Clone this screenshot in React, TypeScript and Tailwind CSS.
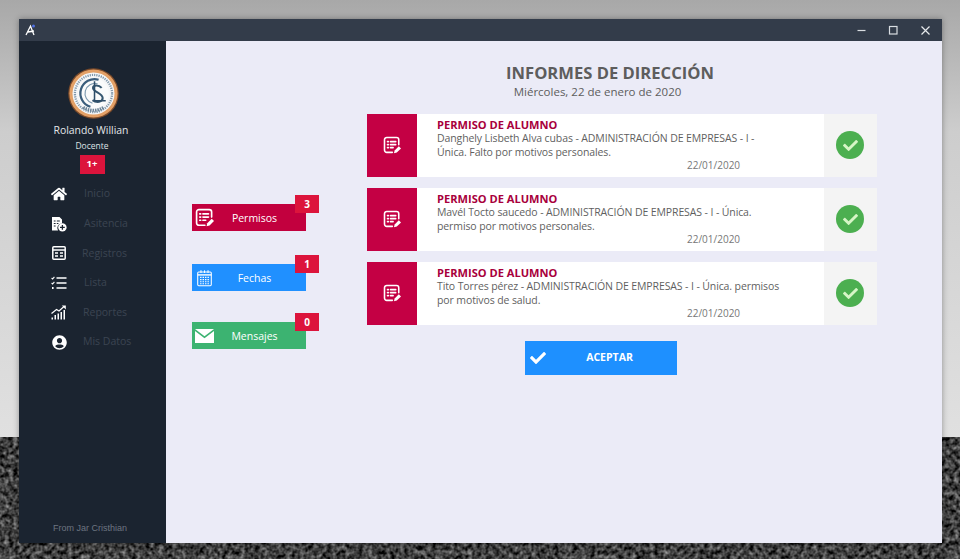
import { FaHome, FaCheck, FaUserCircle } from "react-icons/fa";

function DocPen(props: { size: number }) {
  return (
    <svg width={props.size} height={props.size} viewBox="0 0 24 24" fill="none" stroke="white" strokeWidth="2.1" strokeLinecap="round" strokeLinejoin="round">
      <path d="M12.5 21.8H5a3 3 0 0 1-3-3V5a3 3 0 0 1 3-3h13a3 3 0 0 1 3 3v6.5" />
      <line x1="6" y1="7.5" x2="7.2" y2="7.5" />
      <line x1="10" y1="7.5" x2="17" y2="7.5" />
      <line x1="6" y1="11.5" x2="7.2" y2="11.5" />
      <line x1="10" y1="11.5" x2="17" y2="11.5" />
      <line x1="6" y1="15.5" x2="7.2" y2="15.5" />
      <line x1="10" y1="15.5" x2="13.5" y2="15.5" />
      <path d="M14.6 23l.9-3.8 5.6-5.6 2.9 2.9-5.6 5.6z" fill="white" stroke="none" />
    </svg>
  );
}

function CalendarIcon() {
  return (
    <svg width="15" height="18" viewBox="0 0 17 19" fill="none" stroke="white" strokeWidth="1.2">
      <rect x="0.8" y="2.6" width="15.4" height="15.6" rx="1.2" />
      <line x1="0.8" y1="6" x2="16.2" y2="6" strokeWidth="1.6" />
      <line x1="4.5" y1="0.8" x2="4.5" y2="3.8" />
      <line x1="8.5" y1="0.8" x2="8.5" y2="3.8" />
      <line x1="12.5" y1="0.8" x2="12.5" y2="3.8" />
      <path d="M3.5 8.8h10M3.5 11.3h10M3.5 13.8h10M3.5 16h10" strokeDasharray="1.6 1.2" strokeWidth="1.3" />
    </svg>
  );
}

function MailIcon() {
  return (
    <svg width="19" height="14" viewBox="0 0 19 14" fill="white">
      <path d="M0 0h19L9.5 7.2z" />
      <path d="M0 2l9.5 7.2L19 2v12H0z" />
    </svg>
  );
}

function AddDocIcon() {
  return (
    <svg width="16" height="16" viewBox="0 0 16 16" fill="none">
      <path d="M1 1h7.5L11 3.5v3.9A4.6 4.6 0 0 0 7 14.5H1z" fill="white" />
      <path d="M2.8 5h1.8M5.8 5h3M2.8 7.5h1.8M5.8 7.5h1.6M2.8 10h1.8" stroke="#1b2430" strokeWidth="1.1" />
      <circle cx="11.4" cy="11.4" r="4.2" fill="white" />
      <path d="M11.4 9v4.8M9 11.4h4.8" stroke="#1b2430" strokeWidth="1.3" />
    </svg>
  );
}

function RegistrosIcon() {
  return (
    <svg width="14" height="14" viewBox="0 0 14 14" fill="none" stroke="white">
      <rect x="0.8" y="0.8" width="12.4" height="12.4" rx="1" strokeWidth="1.5" />
      <line x1="1" y1="4" x2="13" y2="4" strokeWidth="1.5" />
      <path d="M3 7h3M8 7h3M3 10h3M8 10h3" strokeWidth="1.5" />
    </svg>
  );
}

function ListaIcon() {
  return (
    <svg width="16" height="14" viewBox="0 0 16 14" fill="none" stroke="white" strokeWidth="1.6">
      <path d="M5.5 2h10M5.5 7h10M5.5 12h10" />
      <path d="M0.6 2l1 1L3.4 0.8" strokeWidth="1.1" />
      <path d="M0.6 7l1 1L3.4 5.8" strokeWidth="1.1" />
      <path d="M1 12h1.6" strokeWidth="1.8" />
    </svg>
  );
}

function ReportesIcon() {
  return (
    <svg width="16" height="15" viewBox="0 0 16 15" fill="white">
      <rect x="0.5" y="12.5" width="1.5" height="2" />
      <rect x="3.5" y="10" width="1.5" height="4.5" />
      <rect x="6.5" y="8.5" width="1.5" height="6" />
      <rect x="9.5" y="7" width="1.5" height="7.5" />
      <rect x="12.5" y="5" width="1.5" height="9.5" />
      <path d="M0.5 8.5L5.5 4.5l2.5 1.5L13 1.5" fill="none" stroke="white" strokeWidth="1.2" />
      <path d="M10.8 0.5h4v4z" />
    </svg>
  );
}

function Logo() {
  return (
    <svg className="ml-[3px]" width="51" height="51" viewBox="0 0 50 50" fill="none">
      <circle cx="25" cy="25" r="24.8" fill="#7a4a2a" />
      <circle cx="25" cy="25" r="23.6" fill="#e3a066" />
      <circle cx="25" cy="25" r="20.6" fill="#f5f6f7" />
      <circle cx="25" cy="25" r="18.2" stroke="#8098ab" strokeWidth="2.2" strokeDasharray="1.2 1" />
      <circle cx="25" cy="25" r="15" fill="#fafbfb" />
      <path d="M30 11.5A13.6 13.6 0 1 0 22 38" stroke="#3a5d7b" strokeWidth="2.2" />
      <path d="M29 15.5A9.8 9.8 0 1 0 24 34.5" stroke="#7a97ad" strokeWidth="1.1" />
      <path d="M33 19.5c-3-3.5-8.5-3-8.5 0 0 4 9.5 5 9.5 10 0 4-6 5-10 2" stroke="#35566f" strokeWidth="2" />
      <path d="M26 13v19h11" stroke="#2d4d68" strokeWidth="1.5" />
      <path d="M15 38.5c6 4 14 4 20 0" stroke="#6c8497" strokeWidth="3" strokeDasharray="1.5 0.9" />
    </svg>
  );
}

const menu = [
  { label: "Inicio", icon: <FaHome size={16} color="white" />, ml: "ml-[9px]" },
  { label: "Asitencia", icon: <AddDocIcon />, ml: "ml-[9px]" },
  { label: "Registros", icon: <RegistrosIcon />, ml: "ml-[7px]" },
  { label: "Lista", icon: <ListaIcon />, ml: "ml-[9px]" },
  { label: "Reportes", icon: <ReportesIcon />, ml: "ml-[8px]" },
  { label: "Mis Datos", icon: <FaUserCircle size={15} color="white" />, ml: "ml-[8px]" },
];

const permisos = [
  {
    text: "Danghely Lisbeth Alva cubas - ADMINISTRACIÓN DE EMPRESAS - I -",
    text2: "Única. Falto por motivos personales.",
  },
  {
    text: "Mavél Tocto saucedo - ADMINISTRACIÓN DE EMPRESAS - I - Única.",
    text2: "permiso por motivos personales.",
  },
  {
    text: "Tito Torres pérez - ADMINISTRACIÓN DE EMPRESAS - I - Única. permisos",
    text2: "por motivos de salud.",
  },
];

function SideButton(props: {
  label: string;
  count: number;
  color: string;
  icon: React.ReactNode;
  mt: string;
}) {
  return (
    <div className={`relative w-[114px] h-[27px] flex items-center ${props.color} ${props.mt}`}>
      <div className="w-[25px] flex items-center justify-center shrink-0">{props.icon}</div>
      <span className="flex-1 text-center text-[10.5px] text-white pr-[14px] pt-[2px]">{props.label}</span>
      <div className="absolute -top-[9px] -right-[13px] w-[24px] h-[18px] bg-[#dc143c] flex items-center justify-center text-[10px] font-bold text-white">
        {props.count}
      </div>
    </div>
  );
}

export default function App() {
  return (
    <div className="relative w-[960px] h-[559px] overflow-hidden bg-[#cfcfcf] font-['Open_Sans',sans-serif]">
      <div className="absolute inset-x-0 top-0 h-[437px] bg-gradient-to-b from-[#a8a8a8] via-[#cdcdcd] via-30% to-[#e0e0e0]" />
      <svg className="absolute left-0 top-[437px]" width="960" height="122">
        <filter id="grass" colorInterpolationFilters="sRGB">
          <feTurbulence type="fractalNoise" baseFrequency="0.22" numOctaves="2" seed="4" />
          <feColorMatrix type="matrix" values="0.9 0 0 0 -0.2 0.9 0 0 0 -0.2 0.9 0 0 0 -0.2 0 0 0 0 1" />
          <feGaussianBlur stdDeviation="0.7" />
        </filter>
        <rect width="960" height="122" fill="#444" />
        <rect width="960" height="122" filter="url(#grass)" />
      </svg>

      {/* app window */}
      <div className="absolute left-[19px] top-[19px] w-[923px] h-[524px] flex flex-col shadow-[0_0_6px_rgba(0,0,0,0.35)]">
        <div className="h-[22px] shrink-0 bg-[#333c4a] flex items-center justify-between">
          <svg className="ml-[6px]" width="12" height="12" viewBox="0 0 12 12" fill="none">
            <path d="M1 11L5.5 2 9 11M3 8l6-1" stroke="white" strokeWidth="1.3" />
            <circle cx="8.5" cy="2" r="1.5" fill="#4f6fe0" />
          </svg>
          <div className="flex items-center gap-[21px] pr-[11px]">
            <svg width="11" height="11" viewBox="0 0 11 11" stroke="#d9dde2" strokeWidth="1.2"><line x1="1.5" y1="5.5" x2="9.5" y2="5.5" /></svg>
            <svg width="11" height="11" viewBox="0 0 11 11" fill="none" stroke="#d9dde2" strokeWidth="1.2"><rect x="1.5" y="1.5" width="7.5" height="7.5" /></svg>
            <svg width="11" height="11" viewBox="0 0 11 11" stroke="#e6e9ec" strokeWidth="1.2"><path d="M1.5 1.5l8 8M9.5 1.5l-8 8" /></svg>
          </div>
        </div>

        <div className="flex-1 flex min-h-0">
          <aside className="w-[147px] shrink-0 bg-[#1b2430] flex flex-col">
            <div className="flex flex-col items-center pt-[27px] pr-px">
              <Logo />
              <div className="mt-[3px] -ml-[2px] text-[10.4px] leading-[16px] text-[#e4e6e9]">Rolando Willian</div>
              <div className="mt-[1px] text-[8.5px] leading-[14px] text-[#dfe2e5]">Docente</div>
              <div className="mt-[2px] w-[25px] h-[19px] bg-[#dc143c] flex items-center justify-center text-[9.5px] font-bold text-white">
                1+
              </div>
            </div>
            <nav className="mt-[5.5px] flex flex-col">
              {menu.map((m) => (
                <div key={m.label} className="h-[29.6px] flex items-center">
                  <div className="w-[56px] pl-[24px] flex justify-center shrink-0">{m.icon}</div>
                  <span className={`${m.ml} text-[10.5px] text-[#3b4552] whitespace-nowrap`}>{m.label}</span>
                </div>
              ))}
            </nav>
            <div className="mt-auto pb-[8px] pl-[34px] text-[9px] leading-[14px] text-[#6d7480] font-['Liberation_Sans',sans-serif]">
              From Jar Cristhian
            </div>
          </aside>

          <main className="flex-1 bg-[#ebebf7] flex flex-col pt-[20px]">
            <div className="flex flex-col items-center pl-[112px]">
              <h1 className="text-[16.6px] leading-[24px] font-bold text-[#5d5d5d]">INFORMES DE DIRECCIÓN</h1>
              <div className="-ml-[25px] text-[11.5px] leading-[14px] text-[#5d5d5d]">Miércoles, 22 de enero de 2020</div>
            </div>

            <div className="flex mt-[15px]">
              <div className="w-[201px] pl-[26px] shrink-0 flex flex-col">
                <SideButton label="Permisos" count={3} color="bg-[#c2003e]" icon={<DocPen size={19} />} mt="mt-[90px]" />
                <SideButton label="Fechas" count={1} color="bg-[#2090ff]" icon={<CalendarIcon />} mt="mt-[33px]" />
                <SideButton label="Mensajes" count={0} color="bg-[#3cb371]" icon={<MailIcon />} mt="mt-[31px]" />
              </div>

              <div className="w-[510px] flex flex-col">
                <div className="flex flex-col gap-[11.5px]">
                  {permisos.map((p, i) => (
                    <div key={i} className="flex bg-white h-[62.5px]">
                      <div className="w-[50px] shrink-0 bg-[#c40044] flex items-center justify-center">
                        <DocPen size={18} />
                      </div>
                      <div className="flex-1 pl-[20px] pt-[4px] flex flex-col">
                        <div className="text-[11.1px] leading-[13px] font-bold text-[#a8003c]">PERMISO DE ALUMNO</div>
                        <div className="text-[10.5px] leading-[14px] tracking-[-0.11px] text-[#5f5f5f] whitespace-nowrap">{p.text}</div>
                        <div className="text-[10.5px] leading-[14px] tracking-[-0.11px] text-[#5f5f5f] whitespace-nowrap">{p.text2}</div>
                        <div className="pl-[250px] -mt-[1px] text-[10px] leading-[14px] text-[#777]">22/01/2020</div>
                      </div>
                      <div className="w-[53px] shrink-0 bg-[#f4f4f4] flex items-center justify-center pr-px">
                        <div className="w-[28px] h-[28px] rounded-full bg-[#4caf50] flex items-center justify-center">
                          <FaCheck size={15} color="#d6f5c6" />
                        </div>
                      </div>
                    </div>
                  ))}
                </div>
                <div className="flex justify-center mt-[16px] pr-[43px]">
                  <div className="relative w-[152px] h-[34px] bg-[#1e90ff] flex items-center justify-center pl-[18px]">
                    <FaCheck size={16} color="white" className="absolute left-[5px] top-[9px]" />
                    <span className="text-[10.5px] font-bold text-white">ACEPTAR</span>
                  </div>
                </div>
              </div>
            </div>
          </main>
        </div>
      </div>
    </div>
  );
}
